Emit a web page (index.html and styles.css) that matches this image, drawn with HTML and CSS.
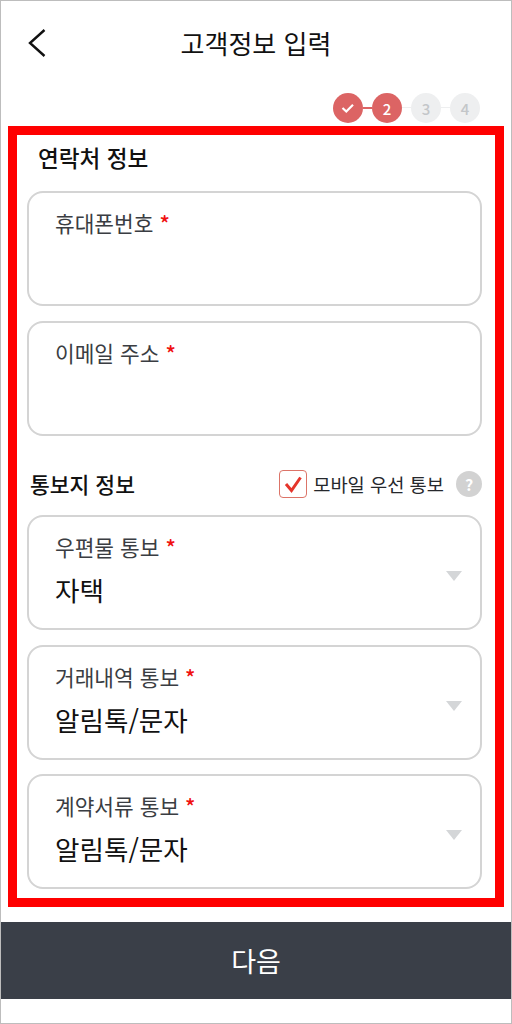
FILE: index.html
```html
<!DOCTYPE html>
<html lang="ko">
<head>
    <meta charset="UTF-8">
    <meta name="viewport" content="width=device-width, initial-scale=1.0">
    <title>고객정보 입력</title>
    <link rel="stylesheet" href="styles.css">
</head>
<body>
    <div class="screen">
        <header class="header">
            <svg class="back" width="20" height="30" viewBox="0 0 20 30"><path d="M17.5 2 L3 15 L17.5 28" fill="none" stroke="#111" stroke-width="2.4"/></svg>
            <h1 class="title">고객정보 입력</h1>
        </header>

        <div class="steps">
            <span class="step done">
                <svg width="16" height="12" viewBox="0 0 16 12"><path d="M2.5 6 L6.3 9.5 L13 2.8" fill="none" stroke="#fff" stroke-width="2.2"/></svg>
            </span>
            <span class="link on"></span>
            <span class="step done">2</span>
            <span class="link"></span>
            <span class="step">3</span>
            <span class="link"></span>
            <span class="step">4</span>
        </div>

        <main class="frame">
            <h2 class="contact-title">연락처 정보</h2>

            <div class="field">
                <div class="label">휴대폰번호 <span class="req">*</span></div>
            </div>
            <div class="field">
                <div class="label">이메일 주소 <span class="req">*</span></div>
            </div>

            <div class="notice-head">
                <h2 class="notice-title">통보지 정보</h2>
                <div class="pref">
                    <span class="checkbox">
                        <svg width="22" height="20" viewBox="0 0 22 20"><path d="M4 10 L9.5 16.5 L18.5 3.5" fill="none" stroke="#e5352b" stroke-width="3"/></svg>
                    </span>
                    <span class="pref-text">모바일 우선 통보</span>
                    <span class="help">?</span>
                </div>
            </div>

            <div class="field select">
                <div class="label">우편물 통보 <span class="req">*</span></div>
                <div class="value">자택</div>
                <span class="arrow"></span>
            </div>
            <div class="field select tight">
                <div class="label">거래내역 통보 <span class="req">*</span></div>
                <div class="value">알림톡/문자</div>
                <span class="arrow"></span>
            </div>
            <div class="field select">
                <div class="label">계약서류 통보 <span class="req">*</span></div>
                <div class="value">알림톡/문자</div>
                <span class="arrow"></span>
            </div>
        </main>

        <button class="next">다음</button>
    </div>
</body>
</html>
```

FILE: styles.css
```css
* {
    box-sizing: border-box;
}

body {
    margin: 0;
    font-family: "Noto Sans CJK KR", "Noto Sans", sans-serif;
    background: #fff;
    color: #111;
}

.screen {
    height: 1024px;
    padding-bottom: 24px;
    border: 1px solid #bdbdbd;
    display: flex;
    flex-direction: column;
    overflow: hidden;
}

.header {
    position: relative;
    height: 92px;
    padding-bottom: 9px;
    display: flex;
    align-items: center;
    justify-content: center;
    flex-shrink: 0;
}

.back {
    position: absolute;
    left: 26px;
    top: 27px;
}

.title {
    margin: 0;
    font-size: 26px;
    font-weight: 400;
    line-height: 36px;
}

.steps {
    height: 33px;
    padding-right: 31px;
    display: flex;
    justify-content: flex-end;
    align-items: flex-start;
    flex-shrink: 0;
}

.step {
    width: 30px;
    height: 30px;
    border-radius: 50%;
    background: #eeeff0;
    color: #c3c6c9;
    font-size: 15px;
    font-weight: 500;
    display: flex;
    align-items: center;
    justify-content: center;
}

.step.done {
    background: #dc6464;
    color: #fff;
}

.link {
    width: 9px;
    height: 1px;
    margin-top: 14px;
    background: #eeeff0;
}

.link.on {
    height: 2px;
    background: #dc6464;
}

.frame {
    margin: 0 7px;
    height: 781px;
    padding: 7px 0 0 10px;
    border: 9px solid #ff0000;
    flex-shrink: 0;
}

.contact-title {
    margin: 0 0 18px 11px;
    font-size: 22.6px;
    font-weight: 500;
    line-height: 31px;
}

.field {
    position: relative;
    width: 455px;
    height: 115px;
    margin-bottom: 15px;
    padding: 16px 0 0 26px;
    border: 2px solid #d4d4d4;
    border-radius: 16px;
}

.field.tight {
    margin-bottom: 14px;
}

.label {
    font-size: 21.4px;
    line-height: 28px;
    color: #3a3d42;
}

.req {
    color: #f01010;
    font-weight: 500;
}

.value {
    margin-top: 11px;
    font-size: 26.6px;
    line-height: 36px;
    color: #111;
}

.arrow {
    position: absolute;
    right: 18px;
    top: 54px;
    border-left: 8px solid transparent;
    border-right: 8px solid transparent;
    border-top: 10px solid #d4d6d8;
}

.notice-head {
    width: 455px;
    height: 64px;
    padding-top: 2px;
    display: flex;
    align-items: center;
    justify-content: space-between;
}

.notice-title {
    margin: 0 0 0 3px;
    font-size: 21.5px;
    font-weight: 500;
    line-height: 28px;
}

.pref {
    display: flex;
    align-items: center;
}

.checkbox {
    width: 28px;
    height: 28px;
    border: 1.5px solid #dc7468;
    border-radius: 4px;
    display: flex;
    align-items: center;
    justify-content: center;
}

.pref-text {
    margin-left: 6px;
    font-size: 18.7px;
    line-height: 26px;
    color: #26282c;
}

.help {
    width: 26px;
    height: 26px;
    margin-left: 12px;
    border-radius: 50%;
    background: #d2d2d2;
    color: #fff;
    font-size: 16px;
    font-weight: 700;
    display: flex;
    align-items: center;
    justify-content: center;
}

.next {
    width: 100%;
    height: 77px;
    margin-top: 15px;
    border: none;
    background: #3a3f48;
    color: #fff;
    font-family: inherit;
    font-size: 27px;
    flex-shrink: 0;
}
```
